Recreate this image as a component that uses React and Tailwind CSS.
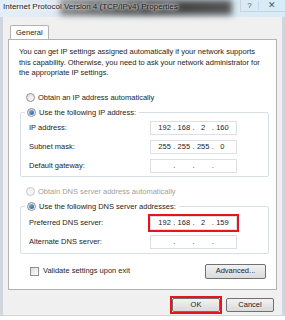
import { useState } from 'react'

function Radio({ checked, disabled }) {
  return (
    <span
      className={`relative inline-flex h-[9px] w-[9px] shrink-0 items-center justify-center rounded-full border ${
        disabled ? 'border-[#c8c8c8] bg-[#f4f4f4]' : 'border-[#8e8f8f] bg-gradient-to-br from-[#dcdcdc] to-white'
      }`}
    >
      {checked && <span className="h-[5px] w-[5px] rounded-full bg-gradient-to-br from-[#7fb8e8] to-[#1b5fa8]" />}
    </span>
  )
}

function IpBox({ parts = ['', '', '', ''], highlight = false }) {
  const box = (
    <div className="grid h-[14px] w-[87px] grid-cols-[1fr_auto_1fr_auto_1fr_auto_1fr] items-center border border-[#dcdfe4] bg-white px-[6px] text-[7.5px] text-[#1e1e1e]">
      {parts.map((p, i) => (
        <div key={i} className="contents">
          <span className="text-center">{p}</span>
          {i < 3 && <span className="px-[1px]">.</span>}
        </div>
      ))}
    </div>
  )
  if (!highlight) return box
  return <div className="-m-[2px] border-2 border-[#e8141c]">{box}</div>
}

function Row({ label, children }) {
  return (
    <div className="flex h-[14px] items-center justify-between pl-[8px] pr-[31px]">
      <span>{label}</span>
      {children}
    </div>
  )
}

function Button({ children, highlight }) {
  return (
    <div className={highlight ? 'border-2 border-[#e8141c]' : 'border-2 border-transparent'}>
      <div className="flex h-[14px] w-[48px] items-center justify-center rounded-[2px] border border-[#707070] bg-gradient-to-b from-[#f2f2f2] to-[#dadada] text-[7.5px]">
        {children}
      </div>
    </div>
  )
}

export default function App() {
  const [validate, setValidate] = useState(false)

  return (
    <div
      className="flex h-[320px] w-[285px] flex-col overflow-hidden bg-gradient-to-b from-[#eaf3fb] to-white text-[7.5px] text-[#1e1e1e]"
      style={{ fontFamily: '"Liberation Sans", Arial, sans-serif' }}
    >
      {/* title bar */}
      <div className="flex h-[17px] shrink-0 items-start bg-gradient-to-r from-[#e4eef8] via-[#dde6ee] to-[#d7ecf8]">
        <div className="relative flex h-[14px] flex-1 items-center pl-[3px]">
          <div className="absolute left-[60px] top-0 h-[15px] w-[172px] bg-gradient-to-r from-[#777] via-[#3a3a3a] to-[#555] blur-[3px]" />
          <span className="relative text-[8px] text-[#1a1a1a] [text-shadow:0_0_3px_#fff,0_0_5px_#fff,0_0_7px_#fff]">
            Internet Protocol Version 4 (TCP/IPv4) Properties
          </span>
        </div>
        <div className="flex h-[12px] items-center border-b border-l border-[#c9d3dd]">
          <span className="flex w-[17px] justify-center text-[8px] text-[#555]">?</span>
          <span className="flex w-[27px] justify-center border-l border-[#c9d3dd] text-[9px] leading-none text-[#555]">✕</span>
        </div>
      </div>

      {/* window body */}
      <div className="flex h-[299px] flex-col border-x-[3px] border-b border-[#cfd6dd] bg-[#f0f0f0] pl-[5px] pr-[3px]">
        {/* tab strip */}
        <div className="flex pt-[8px]">
          <div className="-mb-px ml-[2px] flex h-[15px] items-center rounded-t-[2px] border border-b-0 border-[#b3b3b3] bg-white px-[5px] text-[7.5px]">
            General
          </div>
        </div>

        {/* tab panel */}
        <div className="flex h-[251px] w-[269px] flex-col border border-[#b3b3b3] bg-white pl-[10px] pr-[8px] pt-[7px]">
          <p className="leading-[10.5px]">
            You can get IP settings assigned automatically if your network supports this capability. Otherwise, you
            need to ask your network administrator for the appropriate IP settings.
          </p>

          <div className="mt-[13px] flex items-center gap-[3px] pl-[7px]">
            <Radio />
            <span>Obtain an IP address automatically</span>
          </div>

          <fieldset className="ml-[1px] mt-[4px] w-[249px] rounded-[2px] border border-[#d5dfe5] pb-[3px]">
            <legend className="ml-[4px] flex items-center gap-[3px] pr-[3px] pl-[2px]">
              <Radio checked />
              <span>Use the following IP address:</span>
            </legend>
            <div className="mt-[3px] flex flex-col gap-[5px]">
              <Row label="IP address:">
                <IpBox parts={['192', '168', '2', '160']} />
              </Row>
              <Row label="Subnet mask:">
                <IpBox parts={['255', '255', '255', '0']} />
              </Row>
              <Row label="Default gateway:">
                <IpBox />
              </Row>
            </div>
          </fieldset>

          <div className="mt-[9px] flex items-center gap-[3px] pl-[7px] text-[#a0a0a0]">
            <Radio disabled />
            <span>Obtain DNS server address automatically</span>
          </div>

          <fieldset className="ml-[1px] mt-[4px] w-[249px] rounded-[2px] border border-[#d5dfe5] pb-[4px]">
            <legend className="ml-[4px] flex items-center gap-[3px] pr-[3px] pl-[2px]">
              <Radio checked />
              <span>Use the following DNS server addresses:</span>
            </legend>
            <div className="mt-[3px] flex flex-col gap-[5px]">
              <Row label="Preferred DNS server:">
                <IpBox parts={['192', '168', '2', '159']} highlight />
              </Row>
              <Row label="Alternate DNS server:">
                <IpBox />
              </Row>
            </div>
          </fieldset>

          <div className="mt-[10px] flex items-center justify-between pl-[11px] pr-[2px]">
            <label className="flex items-center gap-[4px]" onClick={() => setValidate(!validate)}>
              <span className="flex h-[9px] w-[9px] items-center justify-center border border-[#8e8f8f] bg-gradient-to-br from-[#dcdcdc] to-white text-[7px] leading-none">
                {validate ? '✓' : ''}
              </span>
              <span>Validate settings upon exit</span>
            </label>
            <div className="flex h-[15px] w-[61px] items-center justify-center rounded-[2px] border border-[#707070] bg-gradient-to-b from-[#f2f2f2] to-[#dadada]">
              Advanced...
            </div>
          </div>
        </div>

        {/* footer buttons */}
        <div className="flex justify-end gap-[2px] pr-[3px] pt-[6px]">
          <Button highlight>OK</Button>
          <Button>Cancel</Button>
        </div>
      </div>
    </div>
  )
}
